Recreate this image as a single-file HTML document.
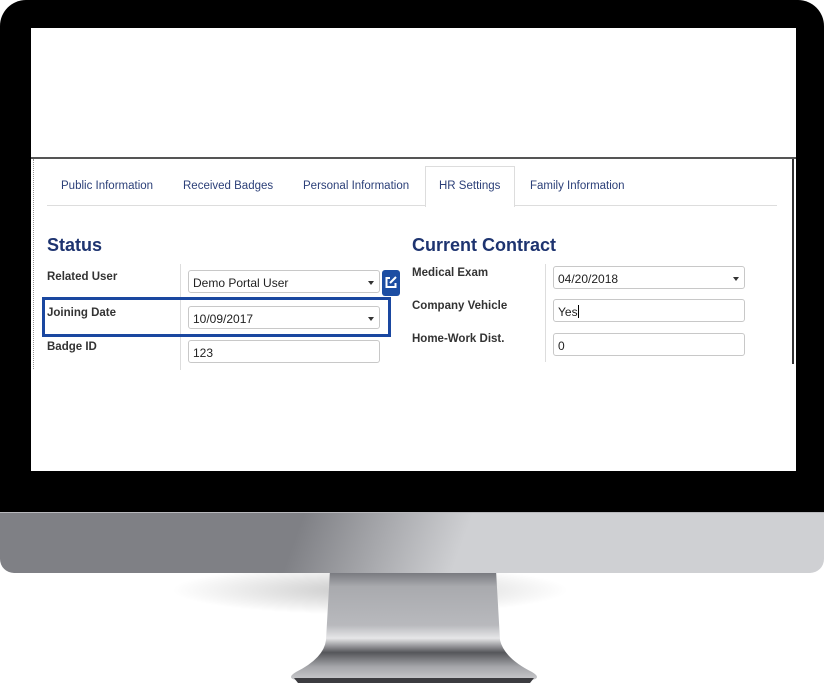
<!DOCTYPE html>
<html><head><meta charset="utf-8"><style>
*{margin:0;padding:0;box-sizing:border-box}
body{width:824px;height:686px;background:#fff;position:relative;overflow:hidden;font-family:"Liberation Sans",sans-serif}
.a{position:absolute}
.tab{position:absolute;top:180px;font-size:11.5px;color:#2b3f78}
.lbl{position:absolute;font-size:11.5px;font-weight:bold;color:#333}
.inp{position:absolute;border:1px solid #c8c8c8;border-radius:3px;background:#fff;font-size:12px;color:#222;padding:5px 0 0 4px;height:23px}
.car{position:absolute;right:5px;top:10px;width:0;height:0;border-left:3.5px solid transparent;border-right:3.5px solid transparent;border-top:4px solid #333}
h2{position:absolute;font-size:18px;color:#1e3470;font-weight:bold}
</style></head><body>
<div class="a" style="left:170px;top:565px;width:400px;height:50px;border-radius:50%;background:radial-gradient(ellipse at center,rgba(0,0,0,.22),rgba(0,0,0,0) 70%)"></div>
<svg class="a" style="left:280px;top:570px" width="270" height="116" viewBox="0 0 270 116">
<defs><linearGradient id="sg" x1="0" y1="0" x2="0" y2="1">
<stop offset="0" stop-color="#6f7076"/><stop offset=".15" stop-color="#a9aaae"/><stop offset=".5" stop-color="#b8b9bd"/><stop offset=".62" stop-color="#e6e6e8"/><stop offset=".75" stop-color="#55565a"/><stop offset=".88" stop-color="#a5a6aa"/><stop offset="1" stop-color="#c9c9cc"/></linearGradient></defs>
<path d="M50 0 L216 0 L220 70 Q224 88 252 102 Q262 108 252 110 L16 110 Q6 108 16 102 Q44 88 46 70 Z" fill="url(#sg)"/>
<path d="M14 108 L254 108 L250 113 L18 113 Z" fill="#3c3c40"/>
</svg>
<div class="a" style="left:0;top:512px;width:824px;height:61px;border-radius:0 0 14px 14px;background:linear-gradient(110deg,#7f8085 0%,#7f8085 36%,#cfd0d3 56%,#cfd0d3 100%)"></div>
<div class="a" style="left:0;top:512px;width:824px;height:1px;background:#b8b8bc"></div>
<div class="a" style="left:0;top:0;width:824px;height:512px;background:#000;border-radius:26px 26px 0 0"></div>
<div class="a" style="left:31px;top:28px;width:765px;height:443px;background:#fff"></div>
<div class="a" style="left:31px;top:157px;width:765px;height:2px;background:#555"></div>
<div class="a" style="left:33px;top:159px;width:1px;height:210px;border-left:1px dotted #999"></div>
<div class="a" style="left:792px;top:159px;width:2px;height:205px;background:#333"></div>
<div class="a" style="left:47px;top:205px;width:730px;height:1px;background:#ddd"></div>
<div class="a" style="left:425px;top:166px;width:90px;height:41px;border:1px solid #ddd;border-bottom:none;background:#fff"></div>
<div class="tab" style="left:61px">Public Information</div>
<div class="tab" style="left:183px">Received Badges</div>
<div class="tab" style="left:303px">Personal Information</div>
<div class="tab" style="left:439px">HR Settings</div>
<div class="tab" style="left:530px">Family Information</div>
<h2 style="left:47px;top:235px">Status</h2>
<h2 style="left:412px;top:235px">Current Contract</h2>
<div class="a" style="left:180px;top:264px;width:1px;height:106px;background:#ddd"></div>
<div class="a" style="left:545px;top:264px;width:1px;height:98px;background:#ddd"></div>
<div class="lbl" style="left:47px;top:271px">Related User</div>
<div class="lbl" style="left:47px;top:307px">Joining Date</div>
<div class="lbl" style="left:47px;top:341px">Badge ID</div>
<div class="lbl" style="left:412px;top:267px">Medical Exam</div>
<div class="lbl" style="left:412px;top:300px">Company Vehicle</div>
<div class="lbl" style="left:412px;top:333px">Home-Work Dist.</div>
<div class="inp" style="left:188px;top:270px;width:192px">Demo Portal User<span class="car"></span></div>
<div class="inp" style="left:188px;top:306px;width:192px">10/09/2017<span class="car"></span></div>
<div class="inp" style="left:188px;top:340px;width:192px">123</div>
<div class="inp" style="left:553px;top:266px;width:192px">04/20/2018<span class="car"></span></div>
<div class="inp" style="left:553px;top:299px;width:192px">Yes<span style="display:inline-block;width:1px;height:13px;background:#000;vertical-align:-2px"></span></div>
<div class="inp" style="left:553px;top:333px;width:192px">0</div>
<div class="a" style="left:382px;top:270px;width:18px;height:26px;background:#1d4ea3;border-radius:3px"></div>
<svg class="a" style="left:384px;top:275px" width="14" height="14" viewBox="0 0 14 14"><path d="M6 3H2.5v9h9V8" fill="none" stroke="#fff" stroke-width="2"/><path d="M6 8L12 2" stroke="#fff" stroke-width="2"/></svg>
<div class="a" style="left:42px;top:297px;width:349px;height:40px;border:3px solid #1a47a0"></div>
</body></html>
